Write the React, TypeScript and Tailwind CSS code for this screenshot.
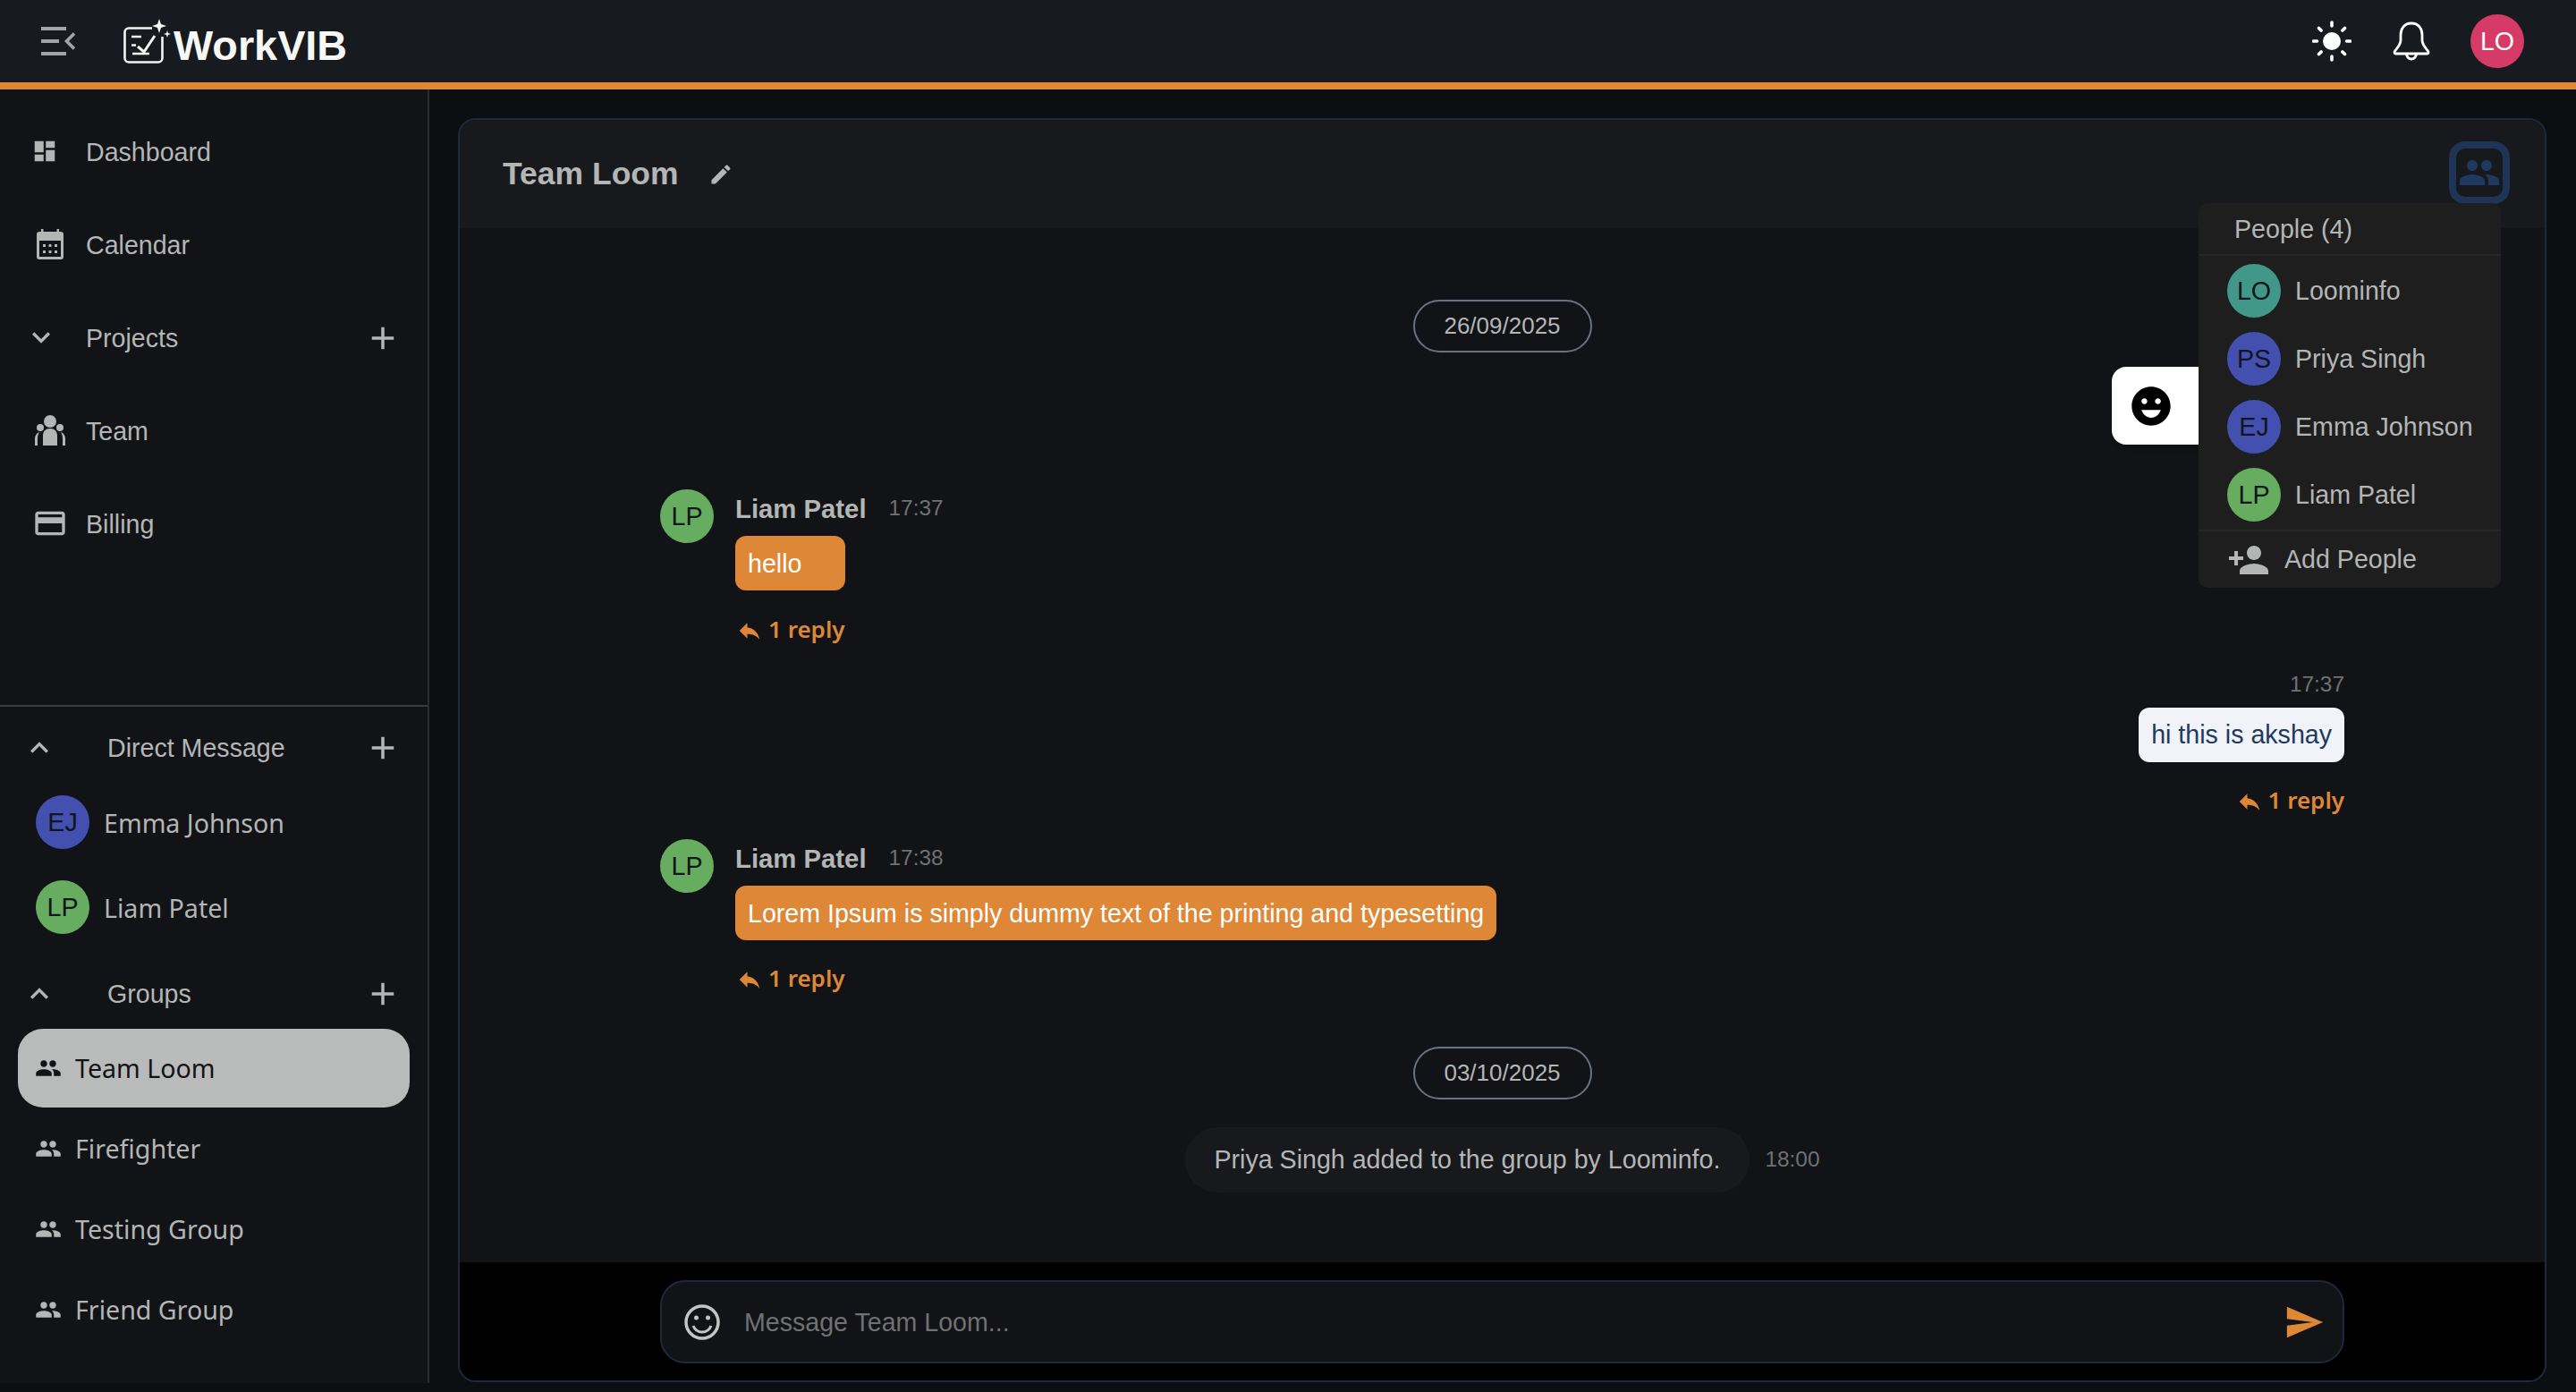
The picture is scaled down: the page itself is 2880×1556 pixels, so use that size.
import React from "react";

const P = {
  dashboard: "M3 13h8V3H3zm0 8h8v-6H3zm10 0h8V11h-8zm0-18v6h8V3z",
  more: "M16.59 8.59 12 13.17 7.41 8.59 6 10l6 6 6-6z",
  less: "m12 8-6 6 1.41 1.41L12 10.83l4.59 4.58L18 14z",
  add: "M19 13h-6v6h-2v-6H5v-2h6V5h2v6h6z",
  people:
    "M16 11c1.66 0 2.99-1.34 2.99-3S17.66 5 16 5c-1.66 0-3 1.34-3 3s1.34 3 3 3m-8 0c1.66 0 2.99-1.34 2.99-3S9.66 5 8 5C6.34 5 5 6.34 5 8s1.34 3 3 3m0 2c-2.33 0-7 1.17-7 3.5V19h14v-2.5c0-2.33-4.67-3.5-7-3.5m8 0c-.29 0-.62.02-.97.05 1.16.84 1.97 1.97 1.97 3.45V19h6v-2.5c0-2.33-4.67-3.5-7-3.5",
  card: "M20 4H4c-1.11 0-1.99.89-1.99 2L2 18c0 1.11.89 2 2 2h16c1.11 0 2-.89 2-2V6c0-1.11-.89-2-2-2m0 14H4v-6h16zm0-10H4V6h16z",
  edit: "M3 17.25V21h3.75L17.81 9.94l-3.75-3.75zM20.71 7.04c.39-.39.39-1.02 0-1.41l-2.34-2.34a.9959.9959 0 0 0-1.41 0l-1.83 1.83 3.75 3.75z",
  reply: "M10 9V5l-7 7 7 7v-4.1c5 0 8.5 1.6 11 5.1-1-5-4-10-11-11",
  send: "M2.01 21 23 12 2.01 3 2 10l15 2-15 2z",
  personAdd:
    "M15 12c2.21 0 4-1.79 4-4s-1.79-4-4-4-4 1.79-4 4 1.79 4 4 4m-9-2V7H4v3H1v2h3v3h2v-3h3v-2zm9 4c-2.67 0-8 1.34-8 4v2h16v-2c0-2.66-5.33-4-8-4",
  emoji:
    "M11.99 2C6.47 2 2 6.48 2 12s4.47 10 9.99 10C17.52 22 22 17.52 22 12S17.52 2 11.99 2zM8.5 8c.83 0 1.5.67 1.5 1.5S9.33 11 8.5 11 7 10.33 7 9.5 7.67 8 8.5 8zM12 18c-2.28 0-4.22-1.66-5-4h10c-.78 2.34-2.72 4-5 4zm3.5-7c-.83 0-1.5-.67-1.5-1.5S14.67 8 15.5 8s1.5.67 1.5 1.5-.67 1.5-1.5 1.5z",
};

function I({ d, className }: { d: string; className: string }) {
  return (
    <svg viewBox="0 0 24 24" fill="currentColor" className={className}>
      <path d={d} />
    </svg>
  );
}

function Avatar({ t, c, className = "" }: { t: string; c: string; className?: string }) {
  return (
    <div
      className={`w-[60px] h-[60px] rounded-full flex items-center justify-center shrink-0 text-[28.6px] text-[#11151c] [font-family:'Liberation_Sans',Arial,sans-serif] ${c} ${className}`}
    >
      {t}
    </div>
  );
}

function NavRow({ icon, label, plus }: { icon: React.ReactNode; label: string; plus?: boolean }) {
  return (
    <div className="h-[104px] flex items-center relative pl-[96px] pr-[29px] text-[28.6px] text-[#b4b6b6]">
      <div className="absolute left-[30px] w-[52px] h-[52px] flex items-center justify-center">{icon}</div>
      <span className="flex-1">{label}</span>
      {plus && <I d={P.add} className="w-[42px] h-[42px] text-[#b4b6b6]" />}
    </div>
  );
}

function SectionHead({ label, h, className = "" }: { label: string; h: string; className?: string }) {
  return (
    <div className={`flex items-center pl-[24px] pr-[29px] text-[28.6px] text-[#b4b6b6] ${h} ${className}`}>
      <I d={P.less} className="w-[40px] h-[40px] mr-[56px]" />
      <span className="flex-1">{label}</span>
      <I d={P.add} className="w-[42px] h-[42px]" />
    </div>
  );
}

function GroupRow({ label, active }: { label: string; active?: boolean }) {
  return (
    <div
      className={`h-[88px] mx-[20px] rounded-[28px] flex items-center pl-[19px] gap-[15px] text-[28.6px] [font-family:'Noto_Sans',sans-serif] ${
        active ? "bg-[#b9bbba] text-[#111316]" : "text-[#b4b6b6]"
      }`}
    >
      <I d={P.people} className="w-[30px] h-[30px]" />
      <span>{label}</span>
    </div>
  );
}

function Reply({ className = "" }: { className?: string }) {
  return (
    <div
      className={`h-[40px] flex items-center gap-[6px] text-[#dd8737] text-[26px] font-semibold [font-family:'Noto_Sans',sans-serif] ${className}`}
    >
      <I d={P.reply} className="w-[30px] h-[30px] mt-[4px]" />
      <span>1 reply</span>
    </div>
  );
}

function DatePill({ t, className = "" }: { t: string; className?: string }) {
  return (
    <div className={`flex justify-center ${className}`}>
      <div className="w-[200px] h-[59px] rounded-full border-2 border-[#6b7280] flex items-center justify-center text-[26px] text-[#b4b6b6]">
        {t}
      </div>
    </div>
  );
}

function Message({ time, text, bubble, gap, replyGap, className = "" }: { time: string; text: string; bubble: string; gap: string; replyGap: string; className?: string }) {
  return (
    <div className={`flex gap-[24px] ${className}`}>
      <Avatar t="LP" c="bg-[#66ad5f]" />
      <div className="flex flex-col items-start">
        <div className="h-[42px] flex items-center gap-[25px] pt-[1px]">
          <span className="text-[29.3px] font-bold text-[#b4b6b6]">Liam Patel</span>
          <span className="text-[24.4px] text-[#6f7174]">{time}</span>
        </div>
        <div className={`h-[61px] rounded-[12px] bg-[#dd8737] text-white text-[28.6px] flex items-center pl-[14px] pt-[1px] ${gap} ${bubble}`}>
          {text}
        </div>
        <Reply className={replyGap} />
      </div>
    </div>
  );
}

export default function App() {
  const peopleList: [string, string, string][] = [
    ["LO", "bg-[#419888]", "Loominfo"],
    ["PS", "bg-[#4350b0]", "Priya Singh"],
    ["EJ", "bg-[#4350b0]", "Emma Johnson"],
    ["LP", "bg-[#66ad5f]", "Liam Patel"],
  ];
  return (
    <div className="w-full h-[1556px] flex flex-col bg-[#0b0f12] overflow-hidden [font-family:'Liberation_Sans',Arial,sans-serif]">
      <header className="h-[100px] shrink-0 box-border border-b-8 border-[#dd8737] bg-[#171b1f] flex items-center pl-[46px] pr-[58px]">
        <svg viewBox="0 0 38 32" className="w-[38px] h-[32px]" fill="#a3a4a5">
          <rect x="0" y="0" width="28" height="4" />
          <rect x="0" y="14" width="20" height="4" />
          <rect x="0" y="28" width="28" height="4" />
          <path d="M37 7.5 28.5 16l8.5 8.5" fill="none" stroke="#a3a4a5" strokeWidth="3.6" />
        </svg>
        <svg viewBox="135 15 60 60" className="w-[60px] h-[60px] ml-[51px]" fill="none" stroke="#f4f4f3" strokeWidth="2.6">
          <path d="M170 30.5h-26a4.5 4.5 0 0 0-4.5 4.5v29a4.5 4.5 0 0 0 4.5 4.5h33a4.5 4.5 0 0 0 4.5-4.5V40" />
          <path d="M147 40h11M147 49.5h5M148 59h19" />
          <path d="M154 51l7 6 12-18" strokeWidth="3" />
          <path d="M178 20l2 6 6 2-6 2-2 6-2-6-6-2 6-2z" fill="#f4f4f3" stroke="none" />
          <path d="M187 33l1 3 3 1-3 1-1 3-1-3-3-1 3-1z" fill="#f4f4f3" stroke="none" />
        </svg>
        <span className="text-[46.8px] font-bold text-[#f7f7f6] ml-[-1px] mt-[10px] leading-none">WorkVIB</span>
        <div className="flex-1" />
        <svg viewBox="0 0 44 48" className="w-[44px] h-[48px]" fill="#fff">
          <circle cx="22" cy="24" r="10" />
          <g stroke="#fff" strokeWidth="3.6" strokeLinecap="round">
            <path d="M22 3v4M22 41v4M1.5 24h4M38.5 24h4M7.5 9.5l2.6 2.6M33.9 35.9l2.6 2.6M7.5 38.5l2.6-2.6M33.9 12.1l2.6-2.6" />
          </g>
        </svg>
        <svg viewBox="0 0 42 44" className="w-[42px] h-[44px] ml-[46px]" fill="none" stroke="#fff" strokeWidth="2.8" strokeLinejoin="round">
          <path d="M21 2c-8 0-12 6-12 13v6c0 4-3 8-6.500 12-1 1.500-.5 3 1 3h35c1.500 0 2-1.500 1-3-3.500-4-6.500-8-6.500-12v-6c0-7-4-13-12-13z" />
          <path d="M15.500 36a5.500 6 0 0 0 11 0" />
        </svg>
        <div className="w-[60px] h-[60px] ml-[45px] rounded-full bg-[#d63a66] text-white text-[28.6px] flex items-center justify-center">LO</div>
      </header>

      <div className="flex flex-1 min-h-0">
        <aside className="w-[480px] shrink-0 h-[1446px] border-r-2 border-[#2a2c2f] bg-[#111316] flex flex-col">
          <nav className="h-[690px] shrink-0 pt-[18px] border-b-2 border-[#3a3c3e]">
            <NavRow label="Dashboard" icon={<I d={P.dashboard} className="w-[30px] h-[30px] ml-[-12px] mt-[-2px]" />} />
            <NavRow
              label="Calendar"
              icon={
                <svg viewBox="0 0 30 34" className="w-[30px] h-[34px] mt-[-2px]" fill="#b4b6b6">
                  <path fillRule="evenodd" d="M5 0h2.500v3h15V0H25v3h2a3 3 0 0 1 3 3v25a3 3 0 0 1-3 3H3a3 3 0 0 1-3-3V6a3 3 0 0 1 3-3h2zM3 13v18h24V13z" />
                  <path d="M7 17h3v3H7zM13.500 17h3v3h-3zM20 17h3v3h-3zM7 24h3v3H7zM13.500 24h3v3h-3zM20 24h3v3h-3z" />
                </svg>
              }
            />
            <NavRow label="Projects" plus icon={<I d={P.more} className="w-[40px] h-[40px] ml-[-20px] mt-[-2px]" />} />
            <NavRow
              label="Team"
              icon={
                <svg viewBox="0 0 34 34" className="w-[34px] h-[34px] mt-[-2px]" fill="#b4b6b6">
                  <circle cx="17" cy="7" r="7" />
                  <circle cx="6" cy="14" r="4" />
                  <circle cx="28" cy="14" r="4" />
                  <path d="M9 34V23c0-5 3-8 8-8s8 3 8 8v11zM0 34v-8c0-3 2-6 5-7-1 2-2 4-2 7v8zM34 34v-8c0-3-2-6-5-7 1 2 2 4 2 7v8z" />
                </svg>
              }
            />
            <NavRow label="Billing" icon={<I d={P.card} className="w-[40px] h-[40px] mt-[-2px]" />} />
          </nav>
          <SectionHead label="Direct Message" h="h-[92px]" />
          <div className="flex flex-col gap-[35px] pl-[40px] pt-[7px] text-[#b4b6b6] text-[28.6px] [font-family:'Noto_Sans',sans-serif]">
            <div className="flex items-center gap-[16px]">
              <Avatar t="EJ" c="bg-[#4350b0]" />
              <span className="mt-[3px]">Emma Johnson</span>
            </div>
            <div className="flex items-center gap-[16px]">
              <Avatar t="LP" c="bg-[#66ad5f]" />
              <span className="mt-[2px]">Liam Patel</span>
            </div>
          </div>
          <SectionHead label="Groups" h="h-[80px]" className="mt-[27px]" />
          <div className="flex flex-col gap-[2px] mt-[-1px]">
            <GroupRow label="Team Loom" active />
            <GroupRow label="Firefighter" />
            <GroupRow label="Testing Group" />
            <GroupRow label="Friend Group" />
          </div>
        </aside>

        <main className="flex-1 min-w-0 pt-[32px] pl-[32px] pr-[33px]">
          <section className="relative h-[1413px] box-border border-2 border-[#1e293b] rounded-[20px] overflow-hidden flex flex-col bg-[#111316]">
            <div className="h-[121px] shrink-0 bg-[#17191d] flex items-center pl-[48px] pr-[39px]">
              <h1 className="text-[35.5px] font-bold text-[#b4b6b6]">Team Loom</h1>
              <I d={P.edit} className="w-[28px] h-[28px] ml-[33px] text-[#b4b6b6]" />
              <div className="flex-1" />
              <div className="w-[68px] h-[70px] box-border border-8 border-[#1e3557] rounded-[18px] flex items-center justify-center mt-[-3px]">
                <I d={P.people} className="w-[48px] h-[48px] text-[#1e3a60] shrink-0" />
              </div>
            </div>

            <div className="flex-1 min-h-0 px-[224px] pt-[80px]">
              <DatePill t="26/09/2025" />
              <Message className="mt-[153px]" time="17:37" text="hello" bubble="w-[123px]" gap="mt-[10px]" replyGap="mt-[23px] ml-[1px]" />
              <div className="mt-[27px] flex flex-col items-end">
                <span className="h-[30px] flex items-center text-[24.4px] text-[#6f7174]">17:37</span>
                <div className="h-[61px] mt-[11px] px-[14px] rounded-[12px] bg-[#f1f3f8] text-[#1e3a5f] text-[28.6px] flex items-center">
                  hi this is akshay
                </div>
                <Reply className="mt-[22px]" />
              </div>
              <Message className="mt-[24px]" time="17:38" text="Lorem Ipsum is simply dummy text of the printing and typesetting" bubble="pr-[14px]" gap="mt-[10px]" replyGap="mt-[22px] ml-[1px]" />
              <DatePill t="03/10/2025" className="mt-[57px]" />
              <div className="mt-[31px] flex justify-center items-center gap-[17px]">
                <div className="h-[73px] px-[33px] rounded-[36px] bg-[#17191d] text-[#b4b6b6] text-[28.6px] flex items-center">
                  Priya Singh added to the group by Loominfo.
                </div>
                <span className="text-[24.4px] text-[#6f7174]">18:00</span>
              </div>
            </div>

            <div className="h-[132px] shrink-0 bg-black px-[224px] pt-[20px]">
              <div className="h-[93px] box-border border-2 border-[#1e293b] rounded-[28px] bg-[#111316] flex items-center pl-[25px] pr-[20px]">
                <svg viewBox="0 0 40 40" className="w-[40px] h-[40px] shrink-0" fill="none" stroke="#c4c4c4" strokeWidth="3.500">
                  <circle cx="20" cy="20" r="18" />
                  <circle cx="13.500" cy="15" r="2.500" fill="#c4c4c4" stroke="none" />
                  <circle cx="26.500" cy="15" r="2.500" fill="#c4c4c4" stroke="none" />
                  <path d="M10 24c2 5 6 7 10 7s8-2 10-7" strokeWidth="3" />
                </svg>
                <span className="ml-[27px] mt-[2px] flex-1 text-[28.6px] text-[#6f7174]">Message Team Loom...</span>
                <I d={P.send} className="w-[46px] h-[46px] text-[#dd8737]" />
              </div>
            </div>

            <div className="absolute left-[1847px] top-[276px] w-[140px] h-[87px] rounded-l-[16px] bg-white shadow-md flex items-center pl-[18px] gap-[24px]">
              <I d={P.emoji} className="w-[52px] h-[52px] text-black shrink-0" />
              <I d={P.emoji} className="w-[52px] h-[52px] text-black shrink-0" />
            </div>

            <div className="absolute right-[49px] top-[93px] w-[338px] h-[430px] rounded-[10px] bg-[#1e1e1e] flex flex-col">
              <div className="h-[59px] shrink-0 box-border border-b-2 border-[#272727] pl-[40px] pt-[1px] flex items-center text-[28.6px] text-[#b4b6b6]">
                People (4)
              </div>
              <div className="flex flex-col gap-[16px] pt-[9px] pl-[32px]">
                {peopleList.map(([t, c, n]) => (
                  <div key={n} className="flex items-center gap-[16px] text-[28.6px] text-[#b4b6b6]">
                    <Avatar t={t} c={c} />
                    <span>{n}</span>
                  </div>
                ))}
              </div>
              <div className="mt-[9px] flex-1 border-t-2 border-[#272727] pl-[32px] flex items-center gap-[16px] text-[28.6px] text-[#b4b6b6]">
                <I d={P.personAdd} className="w-[48px] h-[48px]" />
                <span>Add People</span>
              </div>
            </div>
          </section>
        </main>
      </div>
    </div>
  );
}
